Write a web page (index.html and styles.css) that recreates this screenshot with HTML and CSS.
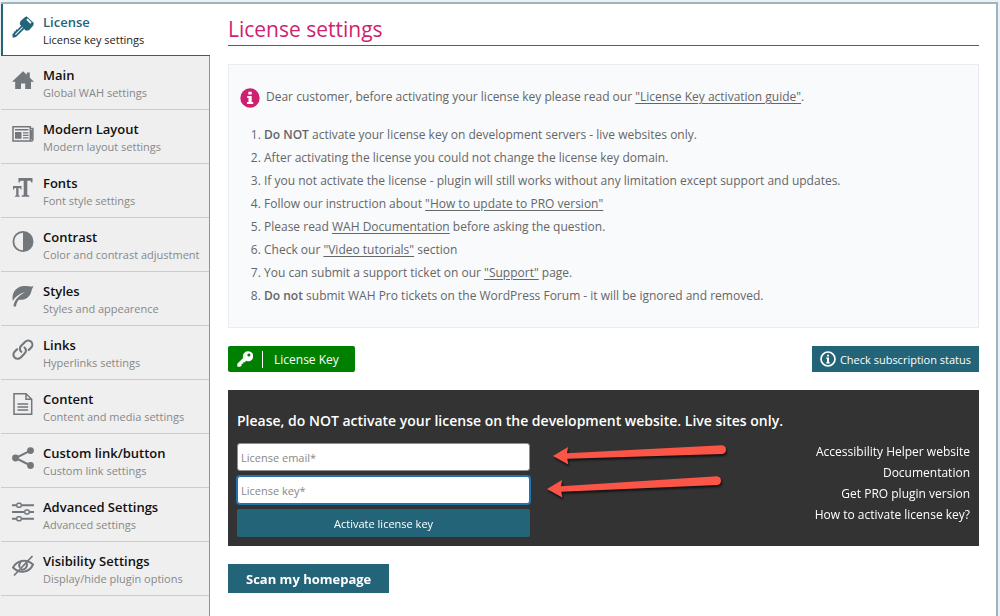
FILE: index.html
```html
<!DOCTYPE html>
<html lang="en">

<head>
    <meta charset="UTF-8">
    <meta name="viewport" content="width=device-width, initial-scale=1.0">
    <title>License settings</title>
    <link rel="stylesheet" href="styles.css">
</head>

<body>

    <div class="panel">
        <!-- Sidebar tabs -->
        <nav class="tabs">
            <a href="#license" class="tab active">
                <svg class="tab-icon" viewBox="0 0 22 22"><path fill="currentColor" fill-rule="evenodd" d="M12.500 1.500 14.500.2 21.800 7l-.5 2.500-4.300 4.800-3 .4-1.800-1.600L4 21 .8 21.700.3 18.500l1.500-1.500.2-1.500 1.700-.2.200-1.700 1.600-.2 3.600-3.600-1.400-1.800.7-2.700zM14.300 3.800l4 3.900 1.300-1.300-4-3.900zM10.300 10.900l-7.300 7.300.7.700 7.300-7.300z"/></svg>
                <span class="tab-text">
                    <span class="tab-title">License</span>
                    <span class="tab-desc">License key settings</span>
                </span>
            </a>
            <a href="#main" class="tab">
                <svg class="tab-icon" viewBox="0 0 22 22"><path fill="currentColor" d="M11 2.200 14.800 5.800V3.500h3v5.200L22 12.800h-3V20h-5.800v-5.500H9V20H3.200v-7.200H0z"/></svg>
                <span class="tab-text">
                    <span class="tab-title">Main</span>
                    <span class="tab-desc">Global WAH settings</span>
                </span>
            </a>
            <a href="#layout" class="tab">
                <svg class="tab-icon" viewBox="0 0 22 22"><path fill="none" stroke="currentColor" stroke-width="1.500" d="M1 3.700h17.300v14.200H1zM18.300 5.500h2.600v11q0 1.500-1.500 1.500h-2.500"/><path fill="currentColor" d="M3 6h13.500v1.600H3zM3 9h6.500v6.800H3zM11 9.200h5.500v1.200H11zM11 11.700h5.500v1.200H11zM11 14.300h5.500v1.200H11zM19 7h1.500v9.500H19z"/></svg>
                <span class="tab-text">
                    <span class="tab-title">Modern Layout</span>
                    <span class="tab-desc">Modern layout settings</span>
                </span>
            </a>
            <a href="#fonts" class="tab">
                <svg class="tab-icon" viewBox="0 0 22 22"><path fill="currentColor" d="M6.500 1h14v4.500h-1.200l-.7-1.800h-3.300v14.300l2 .4v1.400h-7.600v-1.400l2-.4V3.700H8.400l-.7 1.800H6.500zM1 9h8.500v3.500h-1L8 11H6.500v7.400l1.300.3v1.100H2.900v-1.100l1.300-.3V11H2.500L2 12.500H1z"/></svg>
                <span class="tab-text">
                    <span class="tab-title">Fonts</span>
                    <span class="tab-desc">Font style settings</span>
                </span>
            </a>
            <a href="#contrast" class="tab">
                <svg class="tab-icon" viewBox="0 0 22 22"><circle cx="11" cy="10.500" r="9.600" fill="none" stroke="currentColor" stroke-width="1.800"/><path fill="currentColor" d="M11 1a9.500 9.500 0 0 1 0 19z"/></svg>
                <span class="tab-text">
                    <span class="tab-title">Contrast</span>
                    <span class="tab-desc">Color and contrast adjustment</span>
                </span>
            </a>
            <a href="#styles" class="tab">
                <svg class="tab-icon" viewBox="0 0 22 22"><path fill="currentColor" d="M.8 16C-.8 7.500 4.500 1.500 12 1c4-.3 6 .8 9.500.3-1 1.700-1.700 3-2.200 5.200C18 12 13.500 15.500 6.800 14.700 5.200 16.500 4.300 18.500 4 21.500H1.500c0-5.500 5-11 11.800-14.300C7.500 8.500 3 12 .8 16z"/></svg>
                <span class="tab-text">
                    <span class="tab-title">Styles</span>
                    <span class="tab-desc">Styles and appearence</span>
                </span>
            </a>
            <a href="#links" class="tab">
                <svg class="tab-icon" viewBox="0 0 22 22"><g fill="none" stroke="currentColor" stroke-width="2.100" stroke-linecap="round"><path d="M9.300 12.800C7.300 11 7.500 8.500 9.200 6.800L13 3c2-2 4.700-1.700 6.200-.2s1.600 4.200-.2 6l-2.300 2.300"/><path d="M12.500 8.500c2 1.800 1.800 4.300.1 6l-3.800 3.900c-2 2-4.700 1.700-6.200.2s-1.600-4.200.2-6l2.300-2.300"/></g></svg>
                <span class="tab-text">
                    <span class="tab-title">Links</span>
                    <span class="tab-desc">Hyperlinks settings</span>
                </span>
            </a>
            <a href="#content" class="tab">
                <svg class="tab-icon" viewBox="0 0 22 22"><path fill="none" stroke="currentColor" stroke-width="1.500" d="M2 .8h12l5.700 5.500v14.900H2zM14 .8v5.500h5.700"/><path stroke="currentColor" stroke-width="1.500" d="M5.500 11h10.700M5.500 14h10.700M5.500 17h10.700"/></svg>
                <span class="tab-text">
                    <span class="tab-title">Content</span>
                    <span class="tab-desc">Content and media settings</span>
                </span>
            </a>
            <a href="#custom" class="tab">
                <svg class="tab-icon" viewBox="0 0 22 22"><path fill="none" stroke="currentColor" stroke-width="2" d="M18.500 3.600 3.500 11l15 7.500"/><g fill="currentColor"><circle cx="18.500" cy="3.600" r="3.400"/><circle cx="3.500" cy="11" r="3.400"/><circle cx="18.500" cy="18.500" r="3.400"/></g></svg>
                <span class="tab-text">
                    <span class="tab-title">Custom link/button</span>
                    <span class="tab-desc">Custom link settings</span>
                </span>
            </a>
            <a href="#advanced" class="tab">
                <svg class="tab-icon" viewBox="0 0 22 22"><path stroke="currentColor" stroke-width="2" d="M0 4.300h4.500M9.500 4.300H22M0 11h12.500M17.500 11H22M0 17.700h4.500M9.500 17.700H22"/><g fill="none" stroke="currentColor" stroke-width="1.500"><rect x="4.800" y="2.300" width="4.400" height="4" rx="1.500"/><rect x="12.800" y="9" width="4.400" height="4" rx="1.500"/><rect x="4.800" y="15.700" width="4.400" height="4" rx="1.500"/></g></svg>
                <span class="tab-text">
                    <span class="tab-title">Advanced Settings</span>
                    <span class="tab-desc">Advanced settings</span>
                </span>
            </a>
            <a href="#visibility" class="tab">
                <svg class="tab-icon" viewBox="0 0 22 22"><g fill="none" stroke="currentColor" stroke-width="2"><path d="M1 12.500C4.500 5.500 14 3 21 9.500 17.500 17.500 8 19.500 1 12.500z"/><path d="M14 7.500c2.500 3-.5 8-5 7"/><path d="M9 7c-1.800 1.500-2.200 4-1 5.800"/><path stroke-width="1.800" d="M20.500 1 2 20.500"/></g></svg>
                <span class="tab-text">
                    <span class="tab-title">Visibility Settings</span>
                    <span class="tab-desc">Display/hide plugin options</span>
                </span>
            </a>
        </nav>

        <main class="content">
            <h1>License settings</h1>

            <!-- Notes for the customer -->
            <section class="notice">
                <p class="notice-intro">
                    <svg class="notice-icon" viewBox="0 0 20 20"><circle cx="10" cy="10" r="9.700" fill="#cf1f70"/><path fill="#fff" d="M8.300 3.800h3.400v2.700H8.300zM7.200 8h4.500v6h1.500v2H7v-2h1.500v-4H7.200z"/></svg>
                    <span>Dear customer, before activating your license key please read our <a href="#guide">"License Key activation guide"</a>.</span>
                </p>
                <ol>
                    <li><strong>Do NOT</strong> activate your license key on development servers - live websites only.</li>
                    <li>After activating the license you could not change the license key domain.</li>
                    <li>If you not activate the license - plugin will still works without any limitation except support and updates.</li>
                    <li>Follow our instruction about <a href="#update">"How to update to PRO version"</a></li>
                    <li>Please read <a href="#docs">WAH Documentation</a> before asking the question.</li>
                    <li>Check our <a href="#videos">"Video tutorials"</a> section</li>
                    <li>You can submit a support ticket on our <a href="#support">"Support"</a> page.</li>
                    <li><strong>Do not</strong> submit WAH Pro tickets on the WordPress Forum - it will be ignored and removed.</li>
                </ol>
            </section>

            <div class="actions">
                <button type="button" class="btn-key">
                    <svg class="key-icon" viewBox="0 0 16 16"><path fill="#fff" fill-rule="evenodd" d="M10.800.3a5 5 0 1 1-1.600 9.500L7.800 11.200H6.200v1.600H4.600v1.600L3.200 15.700H.3v-2.900l5.800-5.900A5 5 0 0 1 10.800.3zM11.800 2.600a1.500 1.500 0 1 0 .1 3 1.500 1.500 0 0 0-.1-3z"/></svg>
                    <span class="key-label">License Key</span>
                </button>
                <button type="button" class="btn-status">
                    <svg class="status-icon" viewBox="0 0 16 16"><circle cx="8" cy="8" r="7" fill="none" stroke="#fff" stroke-width="1.700"/><path fill="#fff" d="M7 3.700h2v1.700H7zM6.200 6.500H9v4.700h.8v1.200H6.200v-1.200H7V7.700h-.8z"/></svg>
                    Check subscription status
                </button>
            </div>

            <!-- Activation form -->
            <section class="activate">
                <h2>Please, do NOT activate your license on the development website. Live sites only.</h2>
                <div class="activate-body">
                    <form class="license-form">
                        <input type="email" name="email" placeholder="License email*" aria-label="License email">
                        <input type="text" name="key" placeholder="License key*" aria-label="License key" autofocus>
                        <button type="submit">Activate license key</button>
                    </form>
                    <svg class="arrows" viewBox="0 0 180 60">
                        <g fill="#fb5548">
                            <path d="M0 13 15 4l-1 6.200L169 2.300a4.400 4.400 0 0 1 .4 8.700L14.300 15.800l1 5.700z"/>
                            <path d="M-6 46 9 37l-1 6.200L164 33.300a4.400 4.400 0 0 1 .4 8.700L8.300 48.800l1 5.700z"/>
                        </g>
                    </svg>
                    <ul class="help-links">
                        <li><a href="#website">Accessibility Helper website</a></li>
                        <li><a href="#documentation">Documentation</a></li>
                        <li><a href="#pro">Get PRO plugin version</a></li>
                        <li><a href="#activate">How to activate license key?</a></li>
                    </ul>
                </div>
            </section>

            <button type="button" class="btn-scan">Scan my homepage</button>
        </main>
    </div>

</body>

</html>
```
FILE: styles.css
```css
* {
    box-sizing: border-box;
}

body {
    font-family: "Open Sans", "Noto Sans", sans-serif;
    font-size: 12px;
    background-color: #efefef;
    color: #666;
    margin: 0;
    padding: 2px 2px 0 1px;
}

button,
input {
    font-family: inherit;
}

button {
    cursor: pointer;
}

.panel {
    display: flex;
    min-height: calc(100vh - 2px);
    background-color: #fff;
    border-top: 2px solid #98b7c2;
    border-right: 2px solid #98b7c2;
}

/* Sidebar */
.tabs {
    flex: 0 0 209px;
    display: flex;
    flex-direction: column;
    background: linear-gradient(to left, #6f9fae 1px, #efefef 1px);
}

.tab {
    display: flex;
    gap: 9px;
    padding: 10px 0 8px 11px;
    margin-right: 1px;
    border-bottom: 1px solid #ccc;
    color: #72777c;
    text-decoration: none;
}

.tab.active {
    margin-right: 0;
    padding: 9px 0 7px 9px;
    background-color: #fff;
    border-left: 2px solid #246478;
    border-bottom: 1px solid #246478;
    color: #246478;
}

.tab-icon {
    flex: none;
    width: 22px;
    height: 22px;
    margin-top: 3px;
}

.tab-text {
    display: flex;
    flex-direction: column;
    white-space: nowrap;
}

.tab-title {
    font-size: 13px;
    font-weight: 600;
    line-height: 18px;
    color: #111;
}

.tab-desc {
    font-size: 11px;
    line-height: 17px;
    color: #888;
}

.active .tab-title {
    color: #246478;
}

.active .tab-desc {
    color: #222;
}

/* Content */
.content {
    flex: 1;
    min-width: 0;
    padding: 11px 17px 18px 18px;
}

h1 {
    margin: 0 0 18px;
    padding-bottom: 1px;
    border-bottom: 1px solid #cf1f70;
    color: #cf1f70;
    font-size: 21px;
    font-weight: 400;
    line-height: 29px;
}

.notice {
    padding: 20px 11px;
    background-color: #f8fafc;
    border: 1px solid #e9edf1;
}

.notice-intro {
    display: flex;
    gap: 6px;
    margin: 0 0 15px;
    line-height: 23px;
}

.notice-icon {
    flex: none;
    width: 20px;
    height: 20px;
    margin-top: 3px;
}

.notice a {
    color: inherit;
    text-underline-offset: 2px;
}

.notice ol {
    margin: 0;
    padding-left: 24px;
    line-height: 23px;
}

.notice strong {
    font-weight: 600;
}

.actions {
    display: flex;
    justify-content: space-between;
    margin: 18px 0;
}

.actions button {
    display: flex;
    align-items: center;
    height: 26px;
    border: none;
    color: #fff;
}

.actions .btn-key {
    padding: 0 16px 0 9px;
    background-color: #008000;
    border-radius: 2px;
    font-size: 12px;
}

.key-icon {
    width: 16px;
    height: 16px;
    margin-right: 9px;
}

.key-label {
    padding-left: 11px;
    border-left: 1px solid #fff;
}

.actions .btn-status {
    gap: 4px;
    padding: 0 8px;
    background-color: #246478;
    font-size: 11px;
}

.status-icon {
    width: 16px;
    height: 16px;
}

/* Activation box */
.activate {
    padding: 19px 9px 9px;
    background-color: #333;
    color: #fff;
}

.activate h2 {
    margin: 0 0 10px;
    font-size: 14px;
    font-weight: 600;
    line-height: 24px;
}

.activate-body {
    display: flex;
}

.license-form {
    flex: 0 1 40%;
    display: flex;
    flex-direction: column;
    gap: 5px;
}

.license-form input {
    height: 28px;
    padding: 0 3px;
    background-color: #fff;
    border: 1px solid #8c8f94;
    border-radius: 3px;
    color: #333;
    font-size: 11px;
}

.license-form input:focus {
    border-color: #2271b1;
    box-shadow: 0 0 0 1px #2271b1;
    outline: none;
}

.license-form input::placeholder {
    color: #888;
}

.license-form button {
    height: 28px;
    background-color: #246478;
    border: none;
    border-radius: 2px;
    color: #fff;
    font-size: 11px;
}

.arrows {
    flex: none;
    width: 180px;
    height: 60px;
    margin-left: 23px;
    overflow: visible;
    filter: drop-shadow(1px 2px 1px #111);
}

.help-links {
    flex: 1;
    margin: -2px 0 0;
    padding: 0;
    list-style: none;
    text-align: right;
    font-size: 12px;
    line-height: 21px;
    white-space: nowrap;
}

.help-links a {
    color: #fff;
    text-decoration: none;
}

.btn-scan {
    height: 29px;
    margin-top: 18px;
    padding: 0 18px;
    background-color: #246478;
    border: none;
    color: #fff;
    font-size: 13px;
    font-weight: 700;
}
```
